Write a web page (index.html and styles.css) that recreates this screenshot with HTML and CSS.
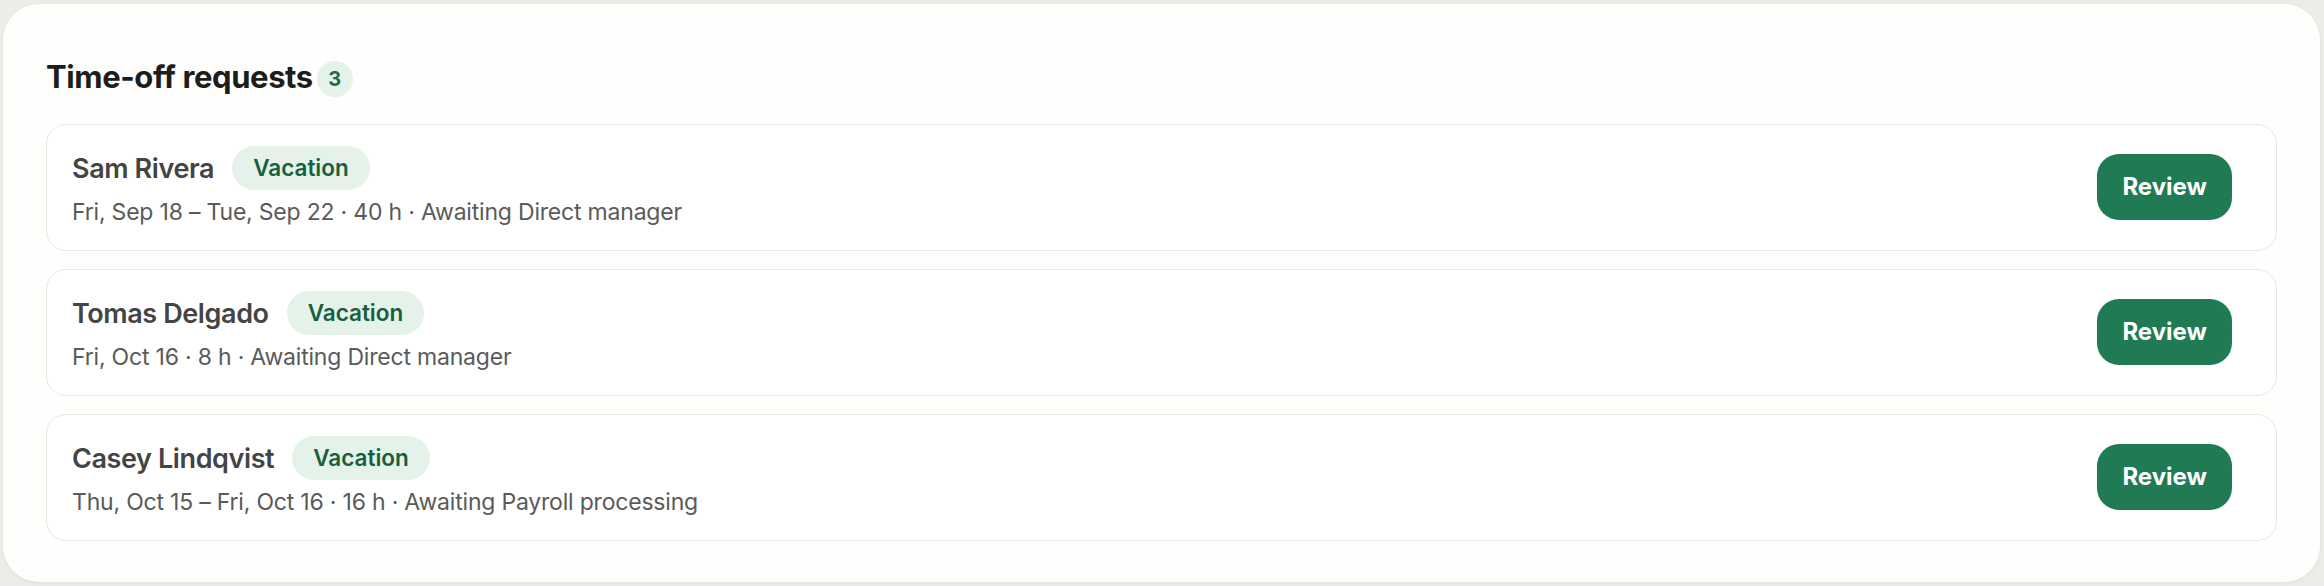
FILE: index.html
```html
<!DOCTYPE html>
<html lang="en">
<head>
    <meta charset="UTF-8">
    <meta name="viewport" content="width=device-width, initial-scale=1.0">
    <title>Time-off requests</title>
    <link rel="stylesheet" href="styles.css">
</head>
<body>

<div class="panel">
    <div class="panel-header">
        <h2>Time-off requests</h2>
        <span class="count">3</span>
    </div>

    <div class="request-list">
        <div class="request">
            <div class="request-info">
                <div class="request-top">
                    <span class="name">Sam Rivera</span>
                    <span class="tag">Vacation</span>
                </div>
                <p class="details">Fri, Sep 18 – Tue, Sep 22 · 40 h · Awaiting Direct manager</p>
            </div>
            <button class="review-btn">Review</button>
        </div>

        <div class="request">
            <div class="request-info">
                <div class="request-top">
                    <span class="name">Tomas Delgado</span>
                    <span class="tag">Vacation</span>
                </div>
                <p class="details">Fri, Oct 16 · 8 h · Awaiting Direct manager</p>
            </div>
            <button class="review-btn">Review</button>
        </div>

        <div class="request">
            <div class="request-info">
                <div class="request-top">
                    <span class="name">Casey Lindqvist</span>
                    <span class="tag">Vacation</span>
                </div>
                <p class="details">Thu, Oct 15 – Fri, Oct 16 · 16 h · Awaiting Payroll processing</p>
            </div>
            <button class="review-btn">Review</button>
        </div>
    </div>
</div>

</body>
</html>
```

FILE: styles.css
```css
body {
    font-family: Inter, "Liberation Sans", sans-serif;
    background-color: #edece8;
    margin: 0;
    padding: 4px 4px 4px 3px;
}
.panel {
    background-color: #fefefc;
    border-radius: 36px;
    box-shadow: 0 1px 4px rgba(0, 0, 0, 0.06);
    padding: 44px 43px 43px 43px;
    box-sizing: border-box;
    height: 578px;
}
.panel-header {
    display: flex;
    align-items: center;
    gap: 4px;
    height: 56px;
    margin-bottom: 20px;
}
h2 {
    margin: 0;
    font-size: 31px;
    font-weight: 700;
    color: #1d1d1b;
    letter-spacing: -0.4px;
}
.count {
    width: 36px;
    height: 36px;
    border-radius: 50%;
    background-color: #e5f2eb;
    color: #1f6b47;
    font-size: 20px;
    font-weight: 700;
    display: flex;
    align-items: center;
    justify-content: center;
    margin-top: 5px;
}
.request-list {
    display: flex;
    flex-direction: column;
    gap: 18px;
}
.request {
    display: flex;
    align-items: center;
    justify-content: space-between;
    background-color: #fff;
    border: 1px solid #e7e6e2;
    border-radius: 20px;
    padding: 21px 44px 23px 25px;
}
.request-top {
    display: flex;
    align-items: center;
    gap: 18px;
    height: 44px;
}
.name {
    font-size: 27px;
    font-weight: 600;
    color: #444;
    letter-spacing: -0.4px;
}
.tag {
    background-color: #e4f2ea;
    color: #17603e;
    font-size: 22.5px;
    font-weight: 600;
    height: 44px;
    line-height: 44px;
    padding: 0 21px;
    border-radius: 22px;
}
.details {
    margin: 7px 0 0;
    font-size: 23px;
    line-height: 30px;
    color: #5a5a5a;
    letter-spacing: -0.2px;
}
.review-btn {
    font-family: inherit;
    background-color: #207b55;
    color: #fff;
    border: none;
    border-radius: 22px;
    font-size: 24px;
    font-weight: 700;
    height: 66px;
    padding: 0 25px;
}
```
